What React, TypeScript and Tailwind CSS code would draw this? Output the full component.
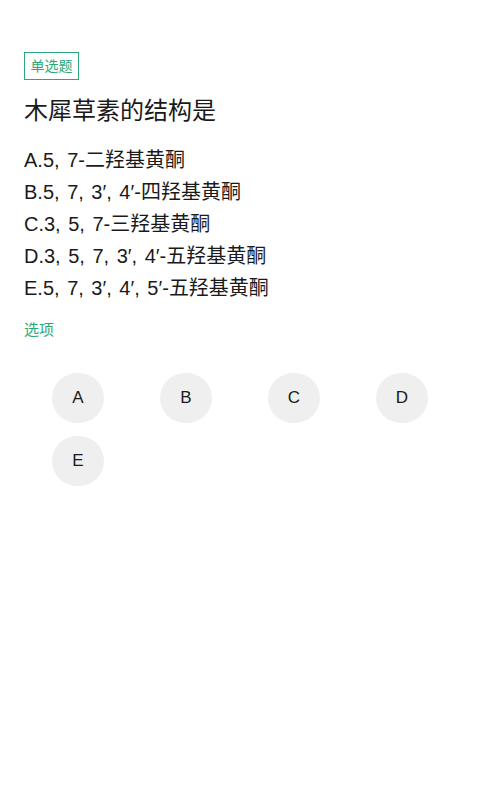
import React from 'react';

const options = [
  'A.5, 7-二羟基黄酮',
  'B.5, 7, 3′, 4′-四羟基黄酮',
  'C.3, 5, 7-三羟基黄酮',
  'D.3, 5, 7, 3′, 4′-五羟基黄酮',
  'E.5, 7, 3′, 4′, 5′-五羟基黄酮',
];

const letters = ['A', 'B', 'C', 'D', 'E'];

const App = () => {
  return (
    <div
      className="min-h-screen bg-white px-6 pt-[52px] text-[#1a1a1a]"
      style={{ fontFamily: '"Liberation Sans", "Noto Sans CJK SC", sans-serif' }}
    >
      <span className="inline-flex h-[28px] items-center border border-[#2aa876] px-[5.5px] text-[14px] text-[#2aa876]">
        单选题
      </span>

      <h1 className="mt-[15px] text-[24px] leading-[32px] font-normal">木犀草素的结构是</h1>

      <div className="mt-[17px]">
        {options.map((o) => (
          <div key={o} className="text-[20px] leading-[32px] [word-spacing:2px]">
            {o}
          </div>
        ))}
      </div>

      <div className="mt-[16px] text-[15px] leading-[20px] text-[#2aa876]">选项</div>

      <div className="mt-[33px] grid grid-cols-4 gap-y-[13px]">
        {letters.map((l) => (
          <div key={l} className="flex justify-center">
            <button className="flex h-[50px] w-[52px] items-center justify-center rounded-full bg-[#efeff0] text-[17px] text-[#1a1a1a]">
              {l}
            </button>
          </div>
        ))}
      </div>
    </div>
  );
};

export default App;
